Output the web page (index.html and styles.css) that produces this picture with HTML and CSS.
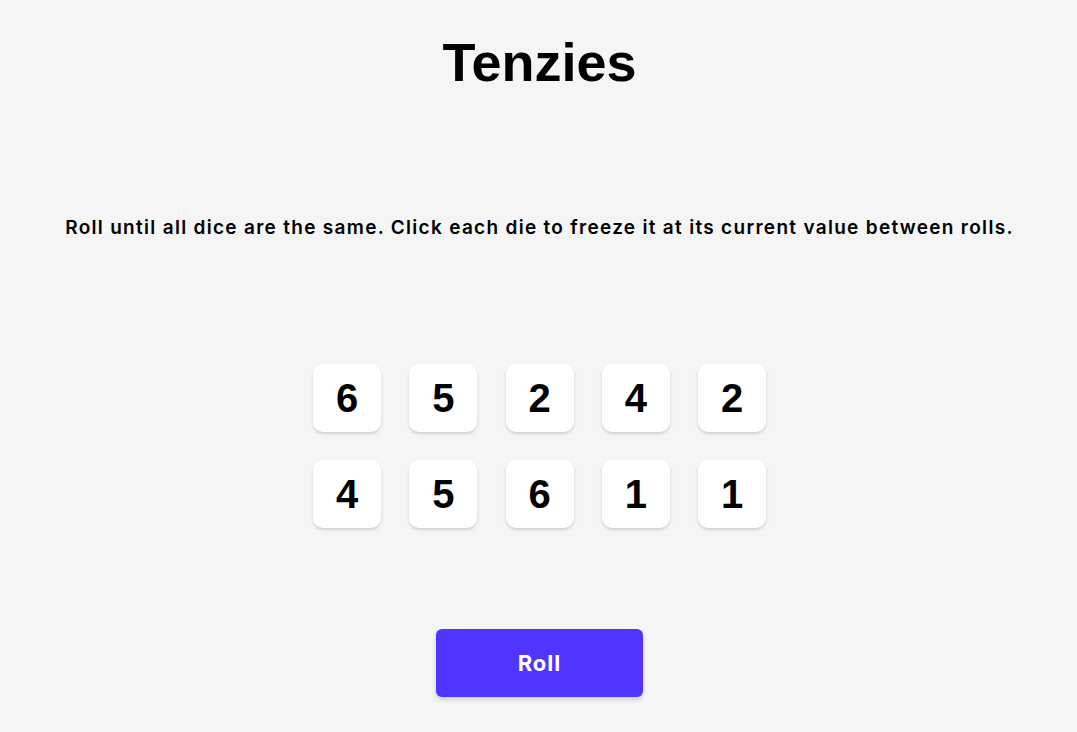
FILE: index.html
```html
<!DOCTYPE html>
<html>
<head>
<meta charset="utf-8">
<link rel="stylesheet" href="styles.css">
</head>
<body>
<main class="game">
  <h1 class="title">Tenzies</h1>
  <p class="instructions">Roll until all dice are the same. Click each die to freeze it at its current value between rolls.</p>
  <div class="dice">
    <button class="die">6</button>
    <button class="die">5</button>
    <button class="die">2</button>
    <button class="die">4</button>
    <button class="die">2</button>
    <button class="die">4</button>
    <button class="die">5</button>
    <button class="die">6</button>
    <button class="die">1</button>
    <button class="die">1</button>
  </div>
  <button class="roll">Roll</button>
</main>
</body>
</html>
```
FILE: styles.css
```css
html, body {
  margin: 0;
  padding: 0;
  background: #f5f5f5;
}
.game {
  display: flex;
  flex-direction: column;
  align-items: center;
  height: 732px;
  padding-left: 2px;
}
.title {
  font-family: "Liberation Sans", Arial, sans-serif;
  font-weight: 700;
  font-size: 54px;
  line-height: 64px;
  margin: 30px 0 0;
  color: #000;
}
.instructions {
  font-family: "Inter", sans-serif;
  font-weight: 600;
  font-size: 19px;
  letter-spacing: 1.3px;
  line-height: 24px;
  margin: 122px 0 0;
  color: #000;
}
.dice {
  display: grid;
  grid-template-columns: repeat(5, 68px);
  grid-auto-rows: 68px;
  gap: 28px 28.25px;
  margin-top: 124px;
}
.die {
  border: none;
  background: #fff;
  border-radius: 10px;
  box-shadow: 0 2px 3px rgba(0, 0, 0, 0.15);
  font-family: "Liberation Sans", Arial, sans-serif;
  font-weight: 700;
  font-size: 40px;
  color: #000;
  padding: 0;
}
.roll {
  margin-top: 101px;
  width: 207px;
  height: 68px;
  border: none;
  border-radius: 6px;
  background: #5035ff;
  color: #fff;
  font-family: "Inter", sans-serif;
  font-weight: 700;
  font-size: 22px;
  letter-spacing: 1px;
  box-shadow: 0 3px 4px rgba(0, 0, 0, 0.15);
}
```
